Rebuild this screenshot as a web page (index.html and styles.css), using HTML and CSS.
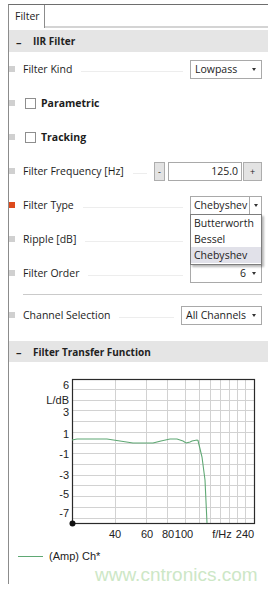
FILE: index.html
```html
<!DOCTYPE html>
<html>
<head>
<meta charset="utf-8">
<link rel="stylesheet" href="styles.css">
</head>
<body>
<div class="panel">
  <div class="tabs"><div class="tab">Filter</div><div class="tabfill"></div></div>

  <div class="head"><span class="minus">–</span>IIR Filter</div>

  <div class="row"><span class="mk"></span><span class="lbl">Filter Kind</span><span class="lead"></span>
    <div class="sel w72"><span class="val">Lowpass</span><span class="arr"></span></div></div>

  <div class="row"><span class="mk"></span><span class="cb"></span><span class="blbl">Parametric</span></div>

  <div class="row"><span class="mk"></span><span class="cb"></span><span class="blbl">Tracking</span></div>

  <div class="row"><span class="mk"></span><span class="lbl">Filter Frequency [Hz]</span><span class="lead"></span>
    <div class="spin"><span class="btn bminus">-</span><span class="num">125.0</span><span class="btn bplus">+</span></div></div>

  <div class="row"><span class="mk act"></span><span class="lbl">Filter Type</span><span class="lead"></span>
    <div class="sel w72 open"><span class="val">Chebyshev</span><span class="abox"><span class="arr"></span></span></div></div>

  <div class="row"><span class="mk"></span><span class="lbl">Ripple [dB]</span><span class="lead"></span>
    <div class="sel w72"><span class="val"></span></div></div>

  <div class="row"><span class="mk"></span><span class="lbl">Filter Order</span><span class="lead"></span>
    <div class="sel w72 right"><span class="val">6</span><span class="arr"></span></div></div>

  <div class="sep"></div>

  <div class="row ch"><span class="mk"></span><span class="lbl">Channel Selection</span><span class="lead"></span>
    <div class="sel w81"><span class="val">All Channels</span><span class="arr"></span></div></div>

  <div class="head head2"><span class="minus">–</span>Filter Transfer Function</div>

  <svg class="chart" width="259" height="182" viewBox="0 0 259 182">
    <g stroke="#d2d2d2" stroke-width="1">
      <line x1="63.5" x2="245.5" y1="27.5" y2="27.5"/>
      <line x1="63.5" x2="245.5" y1="38.5" y2="38.5"/>
      <line x1="63.5" x2="245.5" y1="48.5" y2="48.5"/>
      <line x1="63.5" x2="245.5" y1="59.5" y2="59.5"/>
      <line x1="63.5" x2="245.5" y1="70.5" y2="70.5"/>
      <line x1="63.5" x2="245.5" y1="81.5" y2="81.5"/>
      <line x1="63.5" x2="245.5" y1="91.5" y2="91.5"/>
      <line x1="63.5" x2="245.5" y1="102.5" y2="102.5"/>
      <line x1="63.5" x2="245.5" y1="113.5" y2="113.5"/>
      <line x1="63.5" x2="245.5" y1="123.5" y2="123.5"/>
      <line x1="63.5" x2="245.5" y1="134.5" y2="134.5"/>
      <line x1="63.5" x2="245.5" y1="145.5" y2="145.5"/>
      <line x1="63.5" x2="245.5" y1="156.5" y2="156.5"/>
      <line y1="17.5" y2="161.5" x1="106.5" x2="106.5"/>
      <line y1="17.5" y2="161.5" x1="137.5" x2="137.5"/>
      <line y1="17.5" y2="161.5" x1="158.5" x2="158.5"/>
      <line y1="17.5" y2="161.5" x1="176.5" x2="176.5"/>
      <line y1="17.5" y2="161.5" x1="190.5" x2="190.5"/>
      <line y1="17.5" y2="161.5" x1="201.5" x2="201.5"/>
      <line y1="17.5" y2="161.5" x1="211.5" x2="211.5"/>
      <line y1="17.5" y2="161.5" x1="220.5" x2="220.5"/>
      <line y1="17.5" y2="161.5" x1="228.5" x2="228.5"/>
      <line y1="17.5" y2="161.5" x1="236.5" x2="236.5"/>
    </g>
    <rect x="63.5" y="17.5" width="182" height="144" fill="none" stroke="#2a2a2a" stroke-width="1.2"/>
    <polyline fill="none" stroke="#5fa874" stroke-width="1.1"
      points="63,78 68,77 98,77 111,79 124,81 134,81 144,81 152,79 161,77 168,77 174,79 177,81 181,80 183,79 188,78 189,78.5 193,95 196,118 198,161"/>
    <circle cx="63.5" cy="161.5" r="3" fill="#111"/>
    <g class="ax" text-anchor="end">
      <text x="60" y="27">6</text>
      <text x="60" y="42">L/dB</text>
      <text x="60" y="54">3</text>
      <text x="60" y="76">1</text>
      <text x="60" y="96">-1</text>
      <text x="60" y="117">-3</text>
      <text x="60" y="136">-5</text>
      <text x="60" y="155">-7</text>
    </g>
    <g class="ax" text-anchor="middle">
      <text x="106" y="176">40</text>
      <text x="138" y="176">60</text>
      <text x="159" y="176">80</text>
      <text x="175" y="176">100</text>
      <text x="213" y="176">f/Hz</text>
      <text x="236" y="176">240</text>
    </g>
  </svg>

  <div class="legend"><span class="lline"></span><span class="ltxt">(Amp) Ch*</span></div>

  <div class="dropdown">
    <div class="opt">Butterworth</div>
    <div class="opt">Bessel</div>
    <div class="opt hl">Chebyshev</div>
  </div>

  <div class="watermark">www.cntronics.com</div>
</div>
</body>
</html>
```

FILE: styles.css
```css
body {
  margin: 0;
  background: #fff;
  font-family: "Open Sans", "Noto Sans", sans-serif;
  font-size: 10.5px;
  color: #1c1c1c;
}
.panel {
  position: relative;
  margin: 4px 0 0 8px;
  width: 260px;
  height: 580px;
  box-sizing: border-box;
  border-top: 1px solid #6e6e6e;
  border-left: 1px solid #8c8c8c;
}
.tabs {
  display: flex;
  height: 23px;
}
.tab {
  width: 36px;
  box-sizing: border-box;
  border-right: 1px solid #8c8c8c;
  padding-left: 6px;
  line-height: 22px;
}
.tabfill {
  flex: 1;
  border-bottom: 2px solid #d4d4d4;
}
.head {
  margin-top: 2px;
  height: 22px;
  background: #e5e5e5;
  display: flex;
  align-items: center;
  font-weight: bold;
  font-size: 10px;
  color: #222;
}
.head2 {
  margin-top: 9px;
  height: 21px;
}
.minus {
  margin-left: 7px;
  width: 17px;
  font-size: 11px;
}
.row {
  display: flex;
  align-items: center;
  height: 34px;
  padding-right: 6px;
}
.row.ch {
  margin-top: 3px;
}
.mk {
  width: 6px;
  height: 6px;
  background: #d0d0d0;
  flex: none;
}
.mk.act {
  background: #dd4a1c;
}
.lbl {
  margin-left: 8px;
  white-space: nowrap;
}
.lead {
  flex: 1;
  height: 1px;
  background: #ededed;
  margin: 4px 7px 0 9px;
}
.cb {
  margin-left: 10px;
  width: 11px;
  height: 11px;
  box-sizing: border-box;
  border: 1px solid #8e8e8e;
  flex: none;
}
.blbl {
  margin-left: 5px;
  font-weight: bold;
}
.sel {
  height: 19px;
  box-sizing: border-box;
  border: 1px solid #a9a9a9;
  background: #fff;
  display: flex;
  align-items: center;
  justify-content: space-between;
  padding: 0 4px 0 4px;
  flex: none;
}
.val {
  white-space: nowrap;
  flex: none;
}
.w72 { width: 72px; }
.w81 { width: 81px; }
.sel.right {
  justify-content: flex-end;
  gap: 6px;
}
.arr {
  width: 0;
  height: 0;
  flex: none;
  border-left: 2.5px solid transparent;
  border-right: 2.5px solid transparent;
  border-top: 3px solid #333;
  margin-right: 1px;
}
.sel.open {
  padding: 0 0 0 3px;
}
.abox {
  width: 11px;
  height: 17px;
  flex: none;
  border-left: 1px solid #a9a9a9;
  display: flex;
  align-items: center;
  justify-content: center;
}
.abox .arr {
  margin-right: 0;
}
.spin {
  display: flex;
  align-items: center;
  flex: none;
}
.btn {
  height: 19px;
  box-sizing: border-box;
  border: 1px solid #adadad;
  background: #e3e3e3;
  display: flex;
  align-items: center;
  justify-content: center;
  font-size: 9px;
}
.bminus { width: 11px; margin-right: 3px; }
.bplus { width: 19px; margin-left: 1px; }
.num {
  width: 74px;
  height: 19px;
  box-sizing: border-box;
  border: 1px solid #a9a9a9;
  text-align: right;
  padding-right: 3px;
  line-height: 17px;
}
.sep {
  margin: 4px 6px 0 14px;
  height: 1px;
  background: #cacaca;
}
.chart {
  display: block;
}
.ax {
  font-family: "Liberation Sans", Arial, sans-serif;
  font-size: 11px;
  fill: #222;
}
.legend {
  display: flex;
  align-items: center;
  height: 16px;
  margin-top: 4px;
  font-family: "Liberation Sans", Arial, sans-serif;
  font-size: 11px;
  color: #222;
}
.lline {
  margin-left: 9px;
  width: 25px;
  height: 1px;
  background: #5fa874;
}
.ltxt {
  margin-left: 6px;
}
.dropdown {
  position: absolute;
  left: 181px;
  top: 209px;
  width: 72px;
  height: 51px;
  box-sizing: border-box;
  border: 1px solid #7d7d7d;
  background: #fff;
  box-shadow: 2px 2px 2px rgba(0, 0, 0, 0.28);
}
.opt {
  height: 16px;
  line-height: 16px;
  padding-left: 3px;
}
.opt.hl {
  background: #e1e1e9;
}
.watermark {
  position: absolute;
  left: 86px;
  top: 559px;
  font-family: "Liberation Sans", Arial, sans-serif;
  font-size: 19px;
  color: #cde7c6;
  white-space: nowrap;
}
```
